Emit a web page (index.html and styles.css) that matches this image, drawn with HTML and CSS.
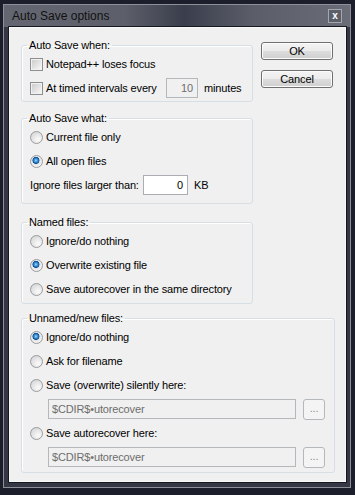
FILE: index.html
```html
<!DOCTYPE html>
<html>
<head>
<meta charset="utf-8">
<meta name="viewport" content="width=device-width, initial-scale=1">
<link rel="stylesheet" href="styles.css">
</head>
<body>

<div class="window">
  <div class="titlebar">
    <span class="title">Auto Save options</span>
    <span class="closeBtn">x</span>
  </div>

  <div class="client">
    <div class="topPart">
      <div class="groups">
        <fieldset class="group g1">
          <legend>Auto Save when:</legend>
          <div class="rows">
            <div class="row"><span class="check"></span><span>Notepad++ loses focus</span></div>
            <div class="row">
              <span class="check"></span><span class="lblTimed">At timed intervals every</span>
              <span class="field minutesField disabled">10</span>
              <span class="unit">minutes</span>
            </div>
          </div>
        </fieldset>

        <fieldset class="group g2">
          <legend>Auto Save what:</legend>
          <div class="rows">
            <div class="row"><span class="radio"></span><span>Current file only</span></div>
            <div class="row"><span class="radio on"></span><span>All open files</span></div>
            <div class="row">
              <span class="lblSize">Ignore files larger than:</span>
              <span class="field sizeField">0</span>
              <span class="unit">KB</span>
            </div>
          </div>
        </fieldset>

        <fieldset class="group g3">
          <legend>Named files:</legend>
          <div class="rows">
            <div class="row"><span class="radio"></span><span>Ignore/do nothing</span></div>
            <div class="row"><span class="radio on"></span><span>Overwrite existing file</span></div>
            <div class="row"><span class="radio"></span><span>Save autorecover in the same directory</span></div>
          </div>
        </fieldset>
      </div>

      <div class="buttons">
        <span class="btn">OK</span>
        <span class="btn">Cancel</span>
      </div>
    </div>

    <fieldset class="group g4">
      <legend>Unnamed/new files:</legend>
      <div class="rows">
        <div class="row"><span class="radio on"></span><span>Ignore/do nothing</span></div>
        <div class="row"><span class="radio"></span><span>Ask for filename</span></div>
        <div class="row"><span class="radio"></span><span>Save (overwrite) silently here:</span></div>
        <div class="row indent">
          <span class="field pathField disabled">$CDIR$<span class="dot">&bull;</span>utorecover</span>
          <span class="browseBtn">...</span>
        </div>
        <div class="row"><span class="radio"></span><span>Save autorecover here:</span></div>
        <div class="row indent">
          <span class="field pathField disabled">$CDIR$<span class="dot">&bull;</span>utorecover</span>
          <span class="browseBtn">...</span>
        </div>
      </div>
    </fieldset>
  </div>
</div>

</body>
</html>
```

FILE: styles.css
```css
* {
  box-sizing: border-box;
}

body {
  margin: 0;
  background: #1c1f2b;
  font-family: "Liberation Sans", Arial, sans-serif;
  font-size: 11px;
  color: #000;
}

/* Window frame */
.window {
  margin: 4px 0 0 3px;
  width: 348px;
  height: 484px;
  border: 1px solid #8d9099;
  background: #353844;
  display: flex;
  flex-direction: column;
}

.titlebar {
  height: 22px;
  padding: 0 8px;
  display: flex;
  align-items: center;
  justify-content: space-between;
  background: linear-gradient(to right, #646771 0%, #5c5f69 35%, #3a3e4c 52%, #5b5e69 72%, #6a6d77 100%);
}

.title {
  font-size: 12px;
  color: #111;
}

.closeBtn {
  width: 14px;
  height: 14px;
  border: 1px solid #a4a7ae;
  background: #5c5f69;
  color: #fff;
  font-weight: bold;
  font-size: 10px;
  line-height: 11px;
  text-align: center;
}

/* Client area */
.client {
  flex: 1;
  margin: 0 4px 5px 5px;
  border: 1px solid #f8f8f8;
  box-shadow: 0 0 0 1px #16181f;
  background: #f0f0f0;
  padding: 11px 10px 0 11px;
  letter-spacing: -0.15px;
}

.topPart {
  display: flex;
}

.groups {
  width: 232px;
}

/* Group boxes */
.group {
  margin: 0;
  padding: 0;
  min-width: 0;
  border: 1px solid #d5dfe5;
  border-radius: 3px;
  box-shadow: inset 1px 1px 0 #fff;
}

.group legend {
  margin-left: 5px;
  padding: 0 2px;
  line-height: 13px;
}

.g1 { padding-bottom: 1px; }
.g2 { margin-top: 10px; padding-bottom: 6px; }
.g3 { margin-top: 12px; padding-bottom: 2px; }
.g4 { margin-top: 8px; padding-bottom: 3px; }

.rows {
  padding: 0 8px;
}

.row {
  height: 24px;
  display: flex;
  align-items: center;
  line-height: 13px;
  white-space: nowrap;
}

.row.indent {
  padding-left: 18px;
}

/* Check boxes and radio buttons */
.check {
  width: 13px;
  height: 13px;
  margin-right: 3px;
  flex: none;
  border: 1px solid #8e8f8f;
  background: linear-gradient(135deg, #c9c9c9 0%, #e4e4e4 55%, #fafafa 100%);
  box-shadow: inset 0 0 0 1px #f2f2f2;
}

.radio {
  width: 13px;
  height: 13px;
  margin-right: 3px;
  flex: none;
  border: 1px solid #9a9b9c;
  border-radius: 50%;
  background: radial-gradient(circle at 65% 70%, #fbfbfb 0%, #e8e8e8 45%, #cdcdcd 100%);
}

.radio.on {
  background: radial-gradient(circle at 45% 40%, #9ad6ff 0%, #2f8ad3 22%, #0c4d91 36%, #e2e2e2 42%, #f4f4f4 70%, #d0d0d0 100%);
}

/* Edit fields */
.field {
  height: 20px;
  border: 1px solid #abadb3;
  background: #fff;
  padding: 0 4px;
  display: flex;
  align-items: center;
  justify-content: flex-end;
}

.field.disabled {
  background: #f0f0f0;
  border-color: #b5b8bb;
  color: #6d6d6d;
}

.lblTimed {
  width: 120px;
}

.minutesField {
  width: 32px;
}

.lblSize {
  width: 113px;
}

.sizeField {
  width: 45px;
}

.unit {
  margin-left: 6px;
}

.pathField {
  width: 248px;
  justify-content: flex-start;
  padding: 0 3px;
}

.dot {
  color: #7e7264;
}

.browseBtn {
  width: 22px;
  height: 21px;
  margin-left: 7px;
  border: 1px solid #b5b8bb;
  border-radius: 3px;
  background: #f4f4f4;
  color: #8d8d8d;
  text-align: center;
  line-height: 16px;
}

/* OK / Cancel buttons */
.buttons {
  margin: 3px 0 0 8px;
  display: flex;
  flex-direction: column;
  gap: 10px;
}

.btn {
  width: 72px;
  height: 18px;
  border: 1px solid #707070;
  border-radius: 3px;
  background: linear-gradient(#f4f4f4 0%, #ebebeb 50%, #dddddd 51%, #cfcfcf 100%);
  box-shadow: inset 0 0 0 1px #fcfcfc;
  text-align: center;
  line-height: 16px;
}
```
